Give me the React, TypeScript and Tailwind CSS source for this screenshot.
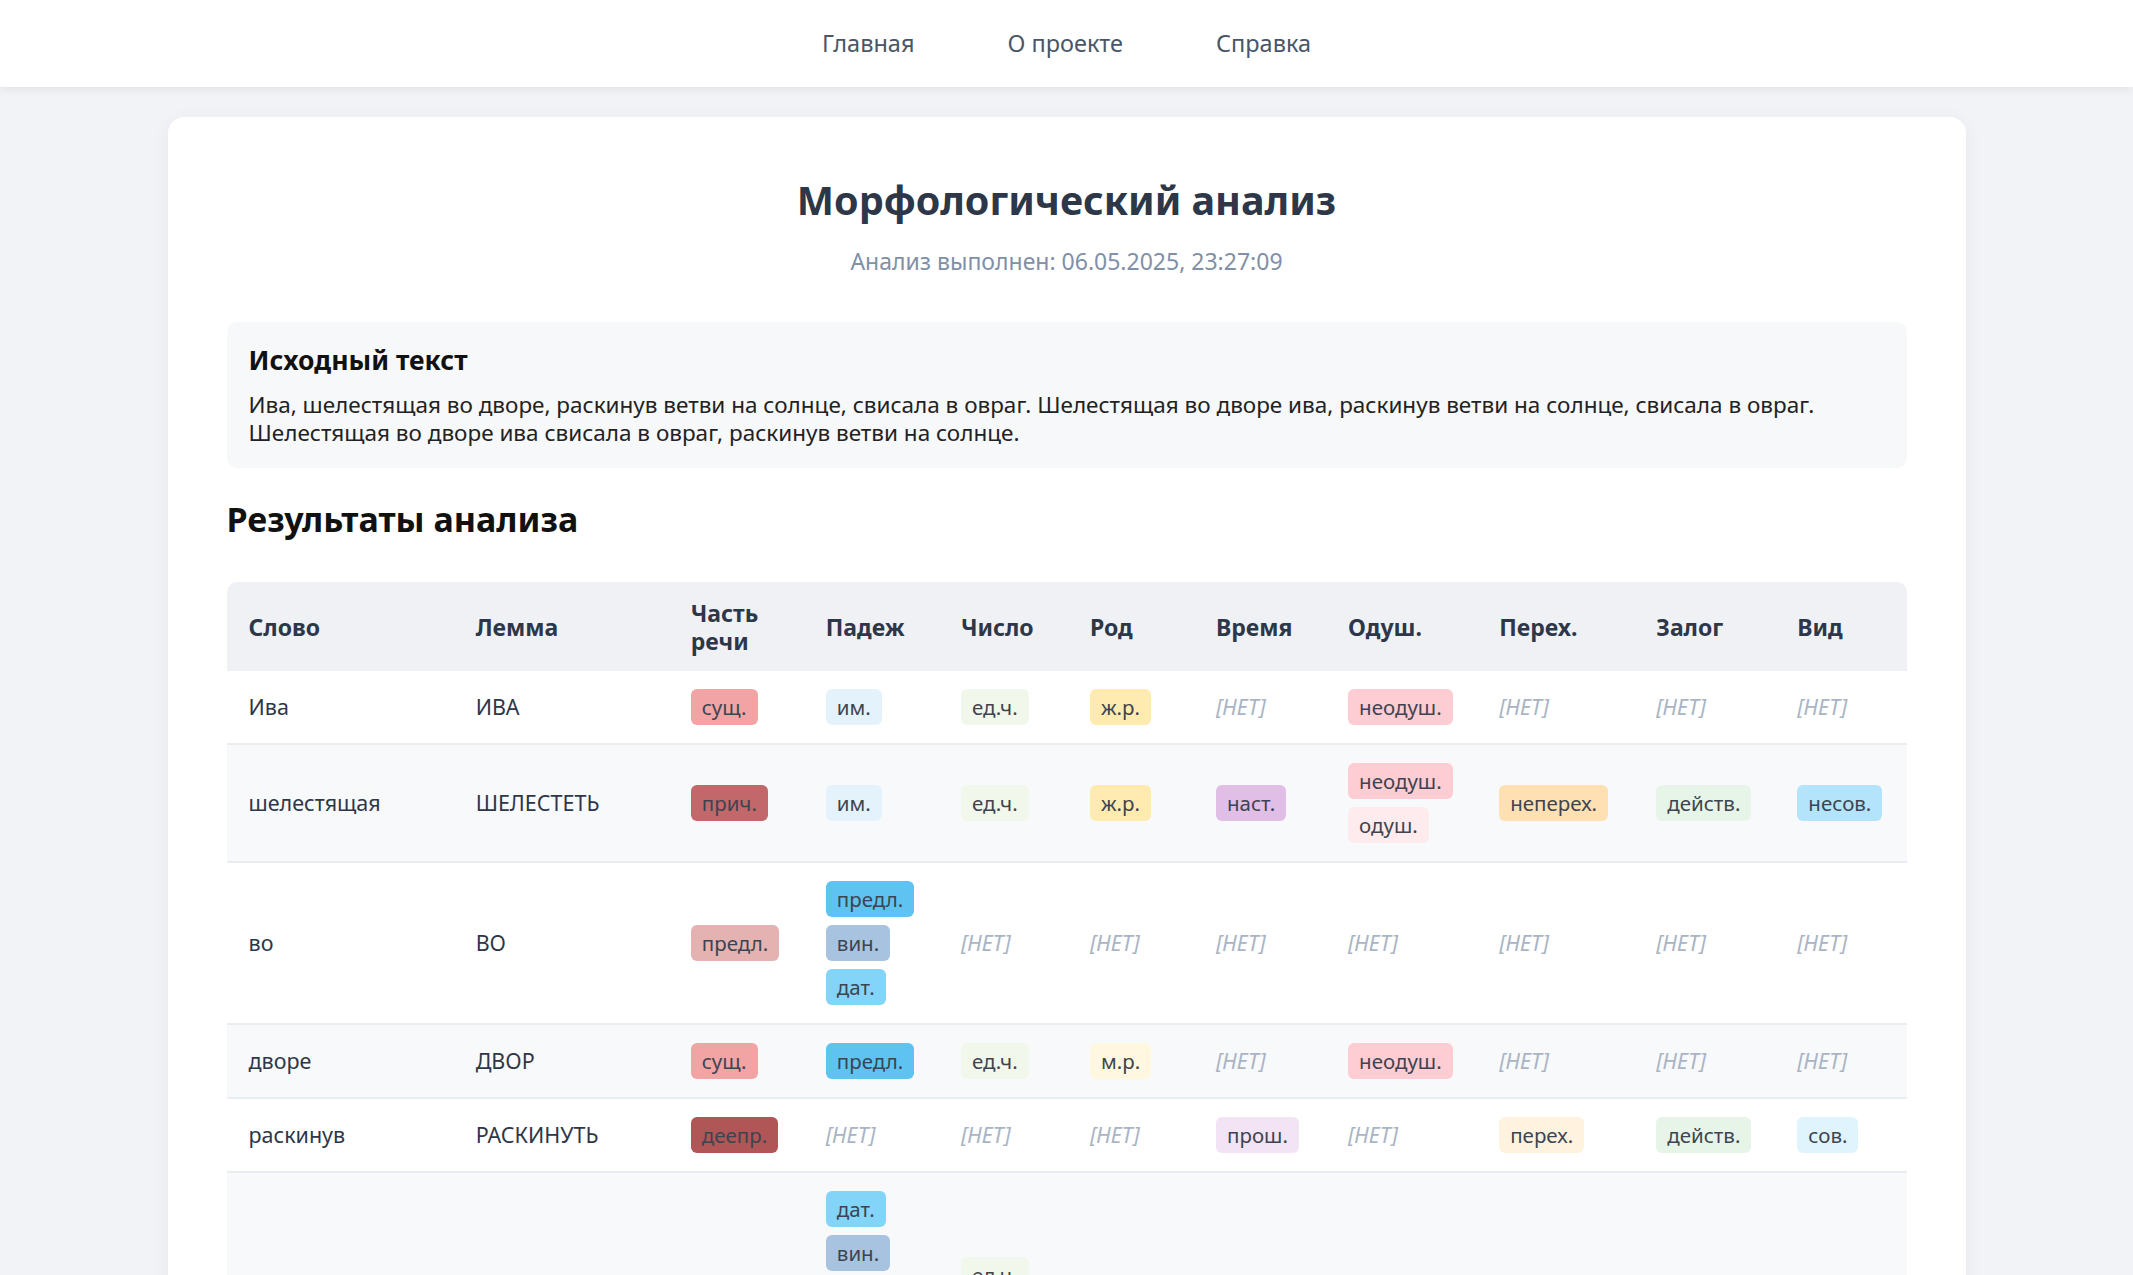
import React from "react";

type Tag = { t: string; c: string };

const C = {
    noun: "bg-[#f2a4a4]",
    prtf: "bg-[#c2686a]",
    prep: "bg-[#e5b2b2]",
    grnd: "bg-[#b05656]",
    nomn: "bg-[#e4f2fc]",
    loct: "bg-[#5ec3f0]",
    accs: "bg-[#a7c3df]",
    datv: "bg-[#82d4f9]",
    gent: "bg-[#b9e3f5]",
    sing: "bg-[#f1f7ea]",
    plur: "bg-[#e3efd6]",
    femn: "bg-[#ffeab0]",
    masc: "bg-[#fff7df]",
    pres: "bg-[#e0bee6]",
    past: "bg-[#f2e4f4]",
    inan: "bg-[#fecdd3]",
    anim: "bg-[#feebee]",
    intr: "bg-[#ffe0b3]",
    tran: "bg-[#fff2df]",
    actv: "bg-[#e7f4e8]",
    impf: "bg-[#b3e4fb]",
    perf: "bg-[#e0f4fd]",
};

type Row = {
    word: string;
    lemma: string;
    pos: Tag[];
    cases: Tag[];
    number: Tag[];
    gender: Tag[];
    tense: Tag[];
    anim: Tag[];
    trans: Tag[];
    voice: Tag[];
    aspect: Tag[];
};

const rows: Row[] = [
    {
        word: "Ива",
        lemma: "ИВА",
        pos: [{ t: "сущ.", c: C.noun }],
        cases: [{ t: "им.", c: C.nomn }],
        number: [{ t: "ед.ч.", c: C.sing }],
        gender: [{ t: "ж.р.", c: C.femn }],
        tense: [],
        anim: [{ t: "неодуш.", c: C.inan }],
        trans: [],
        voice: [],
        aspect: [],
    },
    {
        word: "шелестящая",
        lemma: "ШЕЛЕСТЕТЬ",
        pos: [{ t: "прич.", c: C.prtf }],
        cases: [{ t: "им.", c: C.nomn }],
        number: [{ t: "ед.ч.", c: C.sing }],
        gender: [{ t: "ж.р.", c: C.femn }],
        tense: [{ t: "наст.", c: C.pres }],
        anim: [
            { t: "неодуш.", c: C.inan },
            { t: "одуш.", c: C.anim },
        ],
        trans: [{ t: "неперех.", c: C.intr }],
        voice: [{ t: "действ.", c: C.actv }],
        aspect: [{ t: "несов.", c: C.impf }],
    },
    {
        word: "во",
        lemma: "ВО",
        pos: [{ t: "предл.", c: C.prep }],
        cases: [
            { t: "предл.", c: C.loct },
            { t: "вин.", c: C.accs },
            { t: "дат.", c: C.datv },
        ],
        number: [],
        gender: [],
        tense: [],
        anim: [],
        trans: [],
        voice: [],
        aspect: [],
    },
    {
        word: "дворе",
        lemma: "ДВОР",
        pos: [{ t: "сущ.", c: C.noun }],
        cases: [{ t: "предл.", c: C.loct }],
        number: [{ t: "ед.ч.", c: C.sing }],
        gender: [{ t: "м.р.", c: C.masc }],
        tense: [],
        anim: [{ t: "неодуш.", c: C.inan }],
        trans: [],
        voice: [],
        aspect: [],
    },
    {
        word: "раскинув",
        lemma: "РАСКИНУТЬ",
        pos: [{ t: "деепр.", c: C.grnd }],
        cases: [],
        number: [],
        gender: [],
        tense: [{ t: "прош.", c: C.past }],
        anim: [],
        trans: [{ t: "перех.", c: C.tran }],
        voice: [{ t: "действ.", c: C.actv }],
        aspect: [{ t: "сов.", c: C.perf }],
    },
    {
        word: "ветви",
        lemma: "ВЕТВЬ",
        pos: [{ t: "сущ.", c: C.noun }],
        cases: [
            { t: "дат.", c: C.datv },
            { t: "вин.", c: C.accs },
            { t: "им.", c: C.nomn },
            { t: "предл.", c: C.loct },
            { t: "род.", c: C.gent },
        ],
        number: [
            { t: "ед.ч.", c: C.sing },
            { t: "мн.ч.", c: C.plur },
        ],
        gender: [{ t: "ж.р.", c: C.femn }],
        tense: [],
        anim: [{ t: "неодуш.", c: C.inan }],
        trans: [],
        voice: [],
        aspect: [],
    },
];

const headers = ["Слово", "Лемма", "Часть речи", "Падеж", "Число", "Род", "Время", "Одуш.", "Перех.", "Залог", "Вид"];
const widths = ["w-[227px]", "w-[215px]", "w-[135px]", "w-[135px]", "w-[129px]", "w-[126px]", "w-[132px]", "w-[151px]", "w-[157px]", "w-[141px]", "w-[131px]"];

const Tags = ({ tags }: { tags: Tag[] }) => {
    if (tags.length === 0) {
        return <span className="italic text-[#a9b4c4] text-[21.5px]">[НЕТ]</span>;
    }
    return (
        <div className="flex flex-col items-start gap-[8px]">
            {tags.map((tag, i) => (
                <span
                    key={i}
                    className={`${tag.c} inline-flex items-center h-[36px] px-[11px] rounded-[6px] text-[20.5px] text-[#3d4450] whitespace-nowrap`}
                >
                    {tag.t}
                </span>
            ))}
        </div>
    );
};

const App = (): JSX.Element => {
    return (
        <div className="min-h-screen bg-[#f1f3f6] font-['Noto_Sans',sans-serif]">
            <nav className="h-[87px] bg-white shadow-[0_2px_10px_rgba(0,0,0,0.08)] flex justify-center items-center gap-[93px] relative z-10">
                <a className="text-[23.5px] text-[#4a5568]">Главная</a>
                <a className="text-[23.5px] text-[#4a5568]">О проекте</a>
                <a className="text-[23.5px] text-[#4a5568]">Справка</a>
            </nav>

            <main className="pt-[30px]">
                <div className="w-[1798px] mx-auto bg-white rounded-[16px] shadow-[0_4px_20px_rgba(0,0,0,0.05)] px-[59px] pt-[59px] pb-[60px]">
                    <h1 className="text-center text-[39.5px] leading-[48px] font-bold text-[#2d3748]">Морфологический анализ</h1>
                    <p className="text-center text-[23px] leading-[32px] text-[#8090a6] mt-[21px]">
                        Анализ выполнен: 06.05.2025, 23:27:09
                    </p>

                    <section className="mt-[45px] bg-[#f7f8fa] rounded-[10px] px-[22px] pt-[21px] pb-[21px]">
                        <h3 className="text-[26.5px] leading-[34px] font-bold text-[#111]">Исходный текст</h3>
                        <p className="mt-[14px] text-[22.5px] leading-[28px] text-[#222]">
                            Ива, шелестящая во дворе, раскинув ветви на солнце, свисала в овраг. Шелестящая во дворе ива, раскинув ветви на солнце, свисала в овраг.
                            <br />
                            Шелестящая во дворе ива свисала в овраг, раскинув ветви на солнце.
                        </p>
                    </section>

                    <h2 className="mt-[30px] text-[34px] leading-[42px] font-bold text-[#111]">Результаты анализа</h2>

                    <div className="mt-[42px] rounded-t-[10px] overflow-hidden">
                        <table className="w-full table-fixed border-collapse">
                            <colgroup>
                                {widths.map((w, i) => (
                                    <col key={i} className={w} />
                                ))}
                            </colgroup>
                            <thead>
                                <tr className="bg-[#eff1f5] h-[89px]">
                                    {headers.map((h) => (
                                        <th
                                            key={h}
                                            className="text-left align-middle pl-[22px] pr-[4px] text-[23px] leading-[28px] font-bold text-[#2d3748]"
                                        >
                                            {h === "Часть речи" ? (
                                                <>
                                                    Часть
                                                    <br />
                                                    речи
                                                </>
                                            ) : (
                                                h
                                            )}
                                        </th>
                                    ))}
                                </tr>
                            </thead>
                            <tbody>
                                {rows.map((r, i) => (
                                    <tr
                                        key={r.word}
                                        className={`${i % 2 === 1 ? "bg-[#f8f9fb]" : "bg-white"} border-b-2 border-[#e9edf2]`}
                                    >
                                        <td className="pl-[22px] py-[18px] align-middle text-[21.5px] text-[#2d3748]">{r.word}</td>
                                        <td className="pl-[22px] py-[18px] align-middle text-[21.5px] text-[#2d3748]">{r.lemma}</td>
                                        {[r.pos, r.cases, r.number, r.gender, r.tense, r.anim, r.trans, r.voice, r.aspect].map((tags, j) => (
                                            <td key={j} className="pl-[22px] pr-[4px] py-[18px] align-middle">
                                                <Tags tags={tags} />
                                            </td>
                                        ))}
                                    </tr>
                                ))}
                            </tbody>
                        </table>
                    </div>
                </div>
            </main>
        </div>
    );
};

export default App;
